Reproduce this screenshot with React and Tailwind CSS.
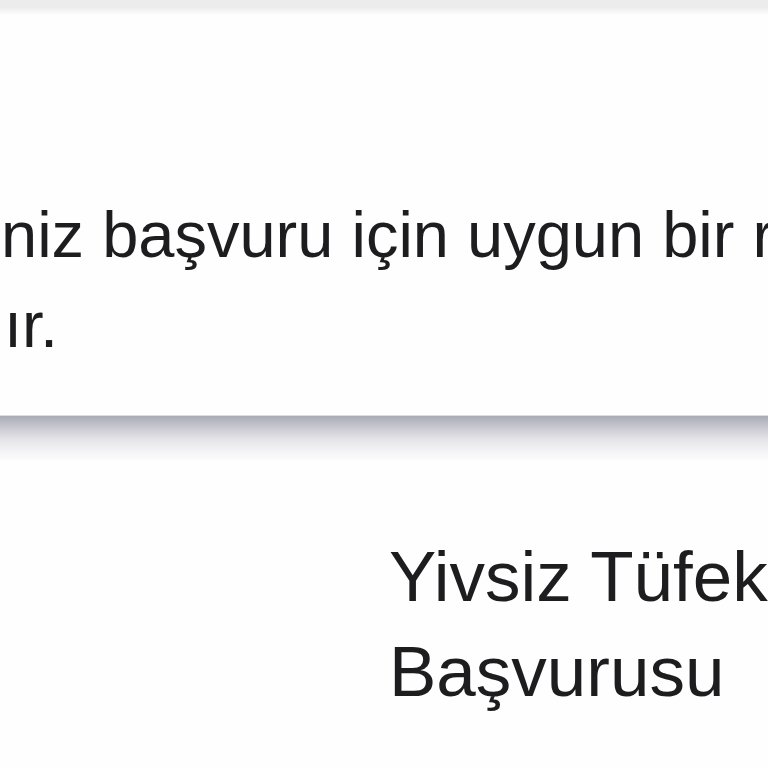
import React from "react";

function App() {
  return (
    <div
      className="w-[768px] h-[768px] overflow-hidden bg-[#fefefe] text-[#1d1d1f]"
      style={{ fontFamily: '"Liberation Sans", Arial, sans-serif' }}
    >
      {/* top strip from the element above */}
      <div className="h-2 bg-[#ececec]" />
      <div className="h-[7px] bg-[linear-gradient(to_bottom,#eeeeee,#fefefe)]" />

      {/* info card */}
      <div className="bg-[#fefefe] pt-[175px] pb-[45px] border-b border-[#dcdce1]">
        <p className="text-[65px] leading-[90px] whitespace-nowrap overflow-hidden pl-[1px]">
          niz başvuru için uygun bir randevu
        </p>
        <p className="text-[65px] leading-[90px] whitespace-nowrap pl-[4px]">ır.</p>
      </div>
      <div className="h-[46px] bg-[linear-gradient(to_bottom,#a9abb5,#c8c9d0_25%,#e3e3e8_50%,#f3f3f5_75%,#fefefe)]" />

      {/* title */}
      <div className="pt-[67px] pl-[389px]">
        <h1 className="text-[71px] leading-[95px] whitespace-nowrap font-normal">
          Yivsiz Tüfek
          <br />
          Başvurusu
        </h1>
      </div>
    </div>
  );
}

export default App;
